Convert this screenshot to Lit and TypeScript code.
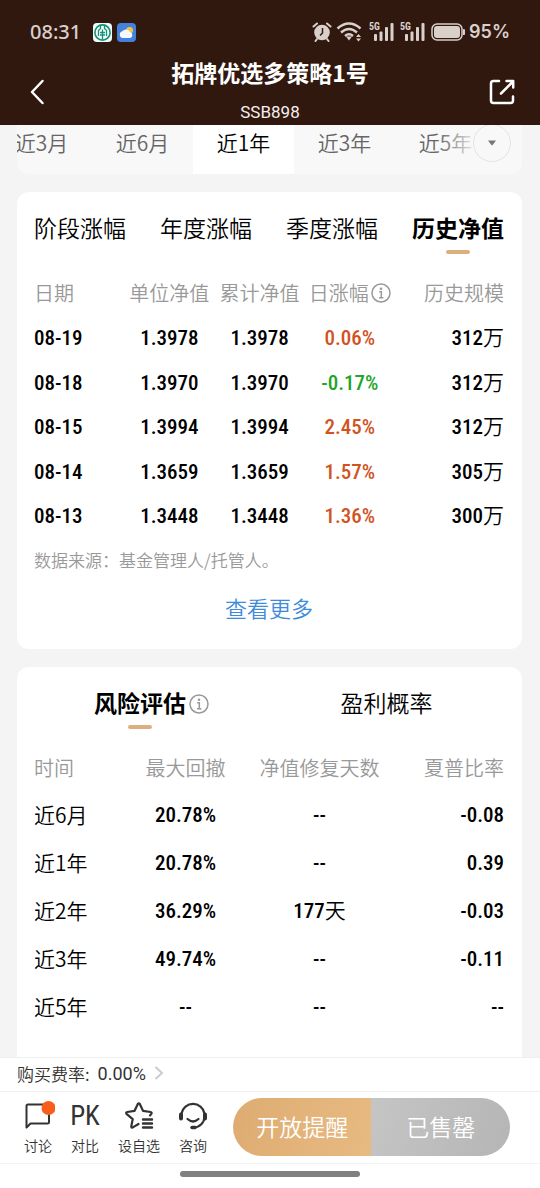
import { LitElement, html, css, svg } from "lit";
import { customElement, state } from "lit/decorators.js";
import { classMap } from "lit/directives/class-map.js";

const navRows = [
  { date: "08-19", unit: "1.3978", total: "1.3978", change: "0.06%", size: "312" },
  { date: "08-18", unit: "1.3970", total: "1.3970", change: "-0.17%", size: "312" },
  { date: "08-15", unit: "1.3994", total: "1.3994", change: "2.45%", size: "312" },
  { date: "08-14", unit: "1.3659", total: "1.3659", change: "1.57%", size: "305" },
  { date: "08-13", unit: "1.3448", total: "1.3448", change: "1.36%", size: "300" },
];

const riskRows = [
  { period: "近6月", drawdown: "20.78%", days: "--", sharpe: "-0.08" },
  { period: "近1年", drawdown: "20.78%", days: "--", sharpe: "0.39" },
  { period: "近2年", drawdown: "36.29%", days: "177", sharpe: "-0.03" },
  { period: "近3年", drawdown: "49.74%", days: "--", sharpe: "-0.11" },
  { period: "近5年", drawdown: "--", days: "--", sharpe: "--" },
];

const shared = css`
  * {
    box-sizing: border-box;
  }
  button {
    margin: 0;
    padding: 0;
    border: 0;
    background: none;
    color: inherit;
    font: inherit;
    white-space: nowrap;
    cursor: pointer;
  }
  svg {
    display: block;
    flex: none;
  }
`;

const infoIcon = html`<svg width="20" height="20" viewBox="0 0 20 20" fill="none" stroke="#999" stroke-width="1.5">
  <circle cx="10" cy="10" r="9" />
  <circle cx="10" cy="5.8" r="1.3" fill="#999" stroke="none" />
  <path d="M8.2 8.8H10.3V14.6M8 14.8H12.4" />
</svg>`;

@customElement("status-bar")
class StatusBar extends LitElement {
  static styles = [
    shared,
    css`
      :host {
        display: flex;
        align-items: center;
        height: 32px;
        padding: 0 30px;
        color: #d9d0cc;
        font: 500 20px/32px Inter, "Noto Sans", sans-serif;
      }
      .apps {
        display: flex;
        gap: 5px;
        margin-left: 12px;
      }
      .system {
        display: flex;
        align-items: center;
        gap: 4px;
        margin-left: auto;
      }
      .time {
        font-family: "Noto Sans", sans-serif;
      }
      .percent {
        font-size: 18px;
        font-weight: 600;
      }
    `,
  ];

  signal() {
    return html`<svg width="27" height="20" viewBox="0 0 27 20" fill="#d9d0cc">
      ${svg`<text x="0" y="8" font-size="10" font-weight="700" font-family="Roboto Condensed, Roboto, sans-serif">5G</text>`}
      <rect x="5" y="12" width="3" height="7" rx="1" />
      <rect x="10.500" y="9.500" width="3" height="9.500" rx="1" />
      <rect x="16" y="5" width="3" height="14" rx="1" />
      <rect x="21.500" y="1" width="3" height="18" rx="1" />
    </svg>`;
  }

  render() {
    return html`
      <span class="time">08:31</span>
      <span class="apps">
        <svg width="19" height="19" viewBox="0 0 19 19">
          <rect width="19" height="19" rx="4" fill="#f3fbf8" />
          <circle cx="9.500" cy="9.500" r="7.600" fill="none" stroke="#159079" stroke-width="1.600" />
          <path d="M7.500 1.800V5.500L5.500 7.500V13M11.500 1.800V5.500L13.500 7.500V13M9.500 6.500V16M7 9.500H12M7 12H12" fill="none" stroke="#159079" stroke-width="1.300" />
        </svg>
        <svg width="19" height="19" viewBox="0 0 19 19">
          <rect width="19" height="19" rx="4" fill="#4481de" />
          <circle cx="12.600" cy="7.300" r="3.400" fill="#f4c440" />
          <path d="M6 15a3.400 3.400 0 0 1-.6-6.700 4.300 4.300 0 0 1 7.400.8A3 3 0 0 1 13 15z" fill="#f7f9ff" />
        </svg>
      </span>
      <span class="system">
        <svg width="20" height="20" viewBox="0 0 20 20" fill="#d9d0cc">
          <circle cx="10" cy="10.500" r="7.800" />
          <path d="M1.500 4.500L5 1.500M18.500 4.500L15 1.500M5 17L3.500 19M15 17L16.500 19" stroke="#d9d0cc" stroke-width="2" stroke-linecap="round" />
          <path d="M10.500 6V11L8 13.500" fill="none" stroke="#31180f" stroke-width="1.500" />
        </svg>
        <svg width="29" height="20" viewBox="0 0 29 20" fill="none" stroke="#d9d0cc" stroke-width="2.400">
          <path d="M1.500 6.500Q13 -3.500 24.500 6.500M5 10.500Q13 3.500 21 10.500M9 14Q13 10.500 17 14" />
          <path d="M10 14.500H16L13 18.500z" fill="#d9d0cc" stroke="none" />
          <path d="M20 15L22.500 12L25 15zM20 16.500L22.500 19.500L25 16.500z" fill="#d9d0cc" stroke="none" />
        </svg>
        ${this.signal()} ${this.signal()}
        <svg width="34" height="18" viewBox="0 0 34 18">
          <rect x="1" y="1" width="30" height="16" rx="5" fill="none" stroke="#d9d0cc" stroke-width="1.500" />
          <rect x="3" y="3" width="26" height="12" rx="3" fill="#d9d0cc" />
          <path d="M32 6a3 3 0 0 1 0 6z" fill="#d9d0cc" />
        </svg>
        <span class="percent">95%</span>
      </span>
    `;
  }
}

@customElement("title-bar")
class TitleBar extends LitElement {
  static styles = [
    shared,
    css`
      :host {
        display: grid;
        grid-template-columns: 28px 1fr 28px;
        align-items: center;
        height: 77px;
        padding: 6px 24px 0;
        color: #fff;
        text-align: center;
      }
      button {
        padding-top: 5px;
      }
      h1 {
        margin: 0 0 10px;
        font-size: 23px;
        line-height: 34px;
        font-weight: 700;
      }
      p {
        margin: 0;
        font: 400 17px/26px Roboto, sans-serif;
        color: #f5efec;
      }
    `,
  ];

  render() {
    return html`
      <button aria-label="返回">
        <svg width="28" height="28" viewBox="0 0 28 28" fill="none" stroke="#fff" stroke-width="2.500" stroke-linecap="round" stroke-linejoin="round">
          <path d="M18.500 3L8 14L18.500 25" />
        </svg>
      </button>
      <div>
        <h1>拓牌优选多策略1号</h1>
        <p>SSB898</p>
      </div>
      <button aria-label="分享">
        <svg width="28" height="28" viewBox="0 0 28 28" fill="none" stroke="#fff" stroke-width="2.500" stroke-linecap="round" stroke-linejoin="round">
          <path d="M11 3H5.500Q3 3 3 5.500V22.500Q3 25 5.500 25H22.500Q25 25 25 22.500V18.500M13 15.500L25 3.500M18.500 3H25.200V9.500" />
        </svg>
      </button>
    `;
  }
}

@customElement("period-tabs")
class PeriodTabs extends LitElement {
  @state() active = "近1年";

  static styles = [
    shared,
    css`
      :host {
        display: block;
        position: relative;
        overflow: hidden;
        border-radius: 12px;
        background: #f8f8f8;
        color: #666;
        font-size: 21px;
      }
      .strip {
        display: flex;
        height: 62px;
        margin-left: -26px;
        margin-right: 26px;
      }
      .tab {
        flex: 0 0 20%;
        padding-bottom: 3px;
      }
      .active {
        background: #fff;
        color: #000;
      }
      .more {
        position: absolute;
        top: 0;
        right: 0;
        bottom: 0;
        display: flex;
        align-items: center;
        justify-content: flex-end;
        width: 84px;
        padding-right: 11px;
        background: linear-gradient(to right, #f8f8f800, #f8f8f8 50%);
      }
      .round {
        display: grid;
        place-items: center;
        width: 38px;
        height: 38px;
        border: 1px solid #e3e3e3;
        border-radius: 50%;
        background: #f8f8f8;
      }
    `,
  ];

  render() {
    return html`
      <div class="strip">
        ${["近3月", "近6月", "近1年", "近3年", "近5年"].map(
          (t) => html`<button class=${classMap({ tab: true, active: t === this.active })} @click=${() => (this.active = t)}>${t}</button>`
        )}
      </div>
      <div class="more">
        <button class="round" aria-label="更多区间">
          <svg width="10" height="6" viewBox="0 0 10 6"><path d="M1 0.500H9L5.600 5Q5 5.700 4.400 5z" fill="#777" /></svg>
        </button>
      </div>
    `;
  }
}

const cardStyles = css`
  :host {
    display: block;
    padding: 12px 18px 10px 17px;
    border-radius: 12px;
    background: #fff;
    color: #000;
  }
  .tabs {
    display: flex;
    justify-content: space-between;
    height: 50px;
    margin-bottom: 16px;
    font-size: 23px;
  }
  .tab {
    position: relative;
    padding-bottom: 4px;
  }
  .active {
    font-weight: 700;
  }
  .active::after {
    content: "";
    position: absolute;
    left: 50%;
    bottom: 0;
    width: 24px;
    height: 4px;
    margin-left: -12px;
    border-radius: 2px;
    background: #dcb07c;
  }
  table {
    width: 100%;
    table-layout: fixed;
    border-collapse: collapse;
    white-space: nowrap;
    font-size: 21px;
    line-height: 30px;
  }
  th,
  td {
    padding: 0;
    text-align: center;
  }
  th {
    height: 46px;
    color: #999;
    font-size: 20px;
    font-weight: inherit;
  }
  .mixed {
    padding-bottom: 2px;
  }
  th:first-child,
  td:first-child {
    text-align: left;
  }
  th:last-child,
  td:last-child {
    text-align: right;
  }
  .num {
    font-family: "Roboto Condensed", Roboto, sans-serif;
    font-size: 21px;
    font-weight: 500;
  }
`;

@customElement("nav-card")
class NavCard extends LitElement {
  @state() active = "历史净值";

  static styles = [
    shared,
    cardStyles,
    css`
      .col {
        width: 19.2%;
      }
      tbody tr:nth-child(odd) td {
        height: 44px;
      }
      tbody tr:nth-child(even) td {
        height: 45px;
      }
      .with-icon {
        display: flex;
        align-items: center;
        justify-content: center;
        gap: 2px;
      }
      .up {
        color: #d1531f;
      }
      .down {
        color: #1fa52a;
      }
      .source {
        margin: 0;
        padding-top: 2px;
        color: #999;
        font-size: 17px;
        line-height: 40px;
      }
      .all {
        display: block;
        width: 100%;
        height: 59px;
        padding-bottom: 5px;
        color: #3e8bdb;
        font-size: 22px;
      }
    `,
  ];

  render() {
    return html`
      <div class="tabs">
        ${["阶段涨幅", "年度涨幅", "季度涨幅", "历史净值"].map(
          (t) => html`<button class=${classMap({ tab: true, active: t === this.active })} @click=${() => (this.active = t)}>${t}</button>`
        )}
      </div>
      <table>
        <thead>
          <tr>
            <th class="col">日期</th>
            <th class="col">单位净值</th>
            <th class="col">累计净值</th>
            <th class="col"><span class="with-icon">日涨幅${infoIcon}</span></th>
            <th>历史规模</th>
          </tr>
        </thead>
        <tbody>
          ${navRows.map(
            (r) => html`<tr>
              <td class="num">${r.date}</td>
              <td class="num">${r.unit}</td>
              <td class="num">${r.total}</td>
              <td class="num ${r.change.startsWith("-") ? "down" : "up"}">${r.change}</td>
              <td class="mixed"><span class="num">${r.size}</span>万</td>
            </tr>`
          )}
        </tbody>
      </table>
      <p class="source">数据来源：基金管理人/托管人。</p>
      <button class="all">查看更多</button>
    `;
  }
}

@customElement("risk-card")
class RiskCard extends LitElement {
  static styles = [
    shared,
    cardStyles,
    css`
      :host {
        padding-bottom: 40px;
      }
      .half {
        display: flex;
        flex: 1;
        align-items: center;
        justify-content: center;
        gap: 3px;
      }
      .tab {
        height: 50px;
      }
      .period {
        width: 18%;
      }
      .mid {
        width: 28.5%;
      }
      td {
        height: 48px;
      }
    `,
  ];

  render() {
    return html`
      <div class="tabs">
        <div class="half"><button class="tab active">风险评估</button>${infoIcon}</div>
        <div class="half"><button class="tab">盈利概率</button></div>
      </div>
      <table>
        <thead>
          <tr>
            <th class="period">时间</th>
            <th class="mid">最大回撤</th>
            <th class="mid">净值修复天数</th>
            <th>夏普比率</th>
          </tr>
        </thead>
        <tbody>
          ${riskRows.map(
            (r) => html`<tr>
              <td class="mixed">${r.period}</td>
              <td class="num">${r.drawdown}</td>
              <td class="mixed"><span class="num">${r.days}</span>${r.days === "--" ? "" : "天"}</td>
              <td class="num">${r.sharpe}</td>
            </tr>`
          )}
        </tbody>
      </table>
    `;
  }
}

@customElement("action-bar")
class ActionBar extends LitElement {
  static styles = [
    shared,
    css`
      :host {
        display: block;
        background: #fff;
        color: #333;
      }
      .fee {
        display: flex;
        align-items: center;
        gap: 8px;
        height: 35px;
        padding: 0 17px 3px;
        border-top: 1px solid #eee;
        border-bottom: 1px solid #f0f0f0;
        color: #333;
        font-size: 17px;
        text-decoration: none;
      }
      .rate {
        font-family: Roboto, sans-serif;
        font-size: 18px;
        font-weight: 400;
      }
      .bar {
        display: flex;
        align-items: center;
        justify-content: space-between;
        height: 72px;
        padding: 0 30px 2px 24px;
        border-bottom: 1px solid #f3f3f3;
      }
      .items {
        display: flex;
        gap: 19px;
      }
      .item {
        display: flex;
        flex-direction: column;
        align-items: center;
        font-size: 14px;
        line-height: 20px;
      }
      .glyph {
        display: flex;
        align-items: center;
        justify-content: center;
        height: 34px;
        width: 28px;
        margin-bottom: 2px;
      }
      .pk {
        font: 400 27px/34px "Roboto Condensed", Roboto, sans-serif;
      }
      .buy {
        display: grid;
        grid-template-columns: 1fr 1fr;
        flex: 0 0 57%;
        height: 58px;
        overflow: hidden;
        border-radius: 29px;
        color: #fff;
        font-size: 23px;
      }
      .remind,
      .sold {
        padding-bottom: 2px;
      }
      .remind {
        background: linear-gradient(100deg, #deac72, #e7ba82);
      }
      .sold {
        background: linear-gradient(110deg, #c5c5c5, #b5b5b5);
      }
      .home {
        display: grid;
        place-items: start center;
        height: 24px;
        padding-top: 7px;
      }
      .handle {
        width: 180px;
        height: 6px;
        border-radius: 3px;
        background: #808080;
      }
    `,
  ];

  render() {
    return html`
      <a class="fee" href="#fee">
        <span>购买费率:</span>
        <span class="rate">0.00%</span>
        <svg width="10" height="14" viewBox="0 0 10 14" fill="none" stroke="#ccc" stroke-width="2"><path d="M1.500 1L8 7L1.500 13" /></svg>
      </a>
      <div class="bar">
        <div class="items">
          <button class="item">
            <span class="glyph">
              <svg width="34" height="34" viewBox="0 0 34 34" fill="none" stroke="#333" stroke-width="2" stroke-linejoin="round">
                <path d="M5.500 28.500V7Q5.500 5.500 7 5.500H26.500Q28 5.500 28 7V23Q28 24.500 26.500 24.500H9.500z" />
                <circle cx="27.500" cy="9" r="7" fill="#f95d1c" stroke="none" />
              </svg>
            </span>
            讨论
          </button>
          <button class="item"><span class="glyph pk">PK</span>对比</button>
          <button class="item">
            <span class="glyph">
              <svg width="32" height="32" viewBox="0 0 32 32" fill="none" stroke="#333" stroke-width="2.200" stroke-linejoin="round" stroke-linecap="round">
                <path d="M15.500 24L9.800 27.400Q8 28 8.300 26.200L9.700 19.200L3.500 13.800Q2.500 12.300 4.200 12L11.600 10.800L14.800 4Q15.800 2.700 16.800 4L20 10.800L27.600 12Q29.300 12.300 28.300 13.800L27 15.500" />
                <path d="M20 19.500H29M20 23.500H29M20 27.500H29" stroke-width="2.400" />
              </svg>
            </span>
            设自选
          </button>
          <button class="item">
            <span class="glyph">
              <svg width="32" height="32" viewBox="0 0 32 32" fill="none" stroke="#333" stroke-width="2.200" stroke-linecap="round">
                <path d="M4.500 13.500A11.700 11.700 0 0 1 27.500 13.500V17A11 11 0 0 1 17 27.500" />
                <path d="M4 14.500V18.500M28 14.500V18.500" stroke-width="4" />
                <path d="M15 27.500H18" stroke-width="3.500" />
                <path d="M10.500 19Q16 24 21.500 19" />
              </svg>
            </span>
            咨询
          </button>
        </div>
        <div class="buy">
          <button class="remind">开放提醒</button>
          <button class="sold">已售罄</button>
        </div>
      </div>
      <div class="home"><div class="handle"></div></div>
    `;
  }
}

@customElement("app-root")
class AppRoot extends LitElement {
  static styles = [
    shared,
    css`
      :host {
        display: flex;
        flex-direction: column;
        height: 100vh;
        overflow: hidden;
        background: #f4f4f4;
        font-family: "Noto Sans CJK SC", sans-serif;
        font-weight: 350;
      }
      header {
        flex: none;
        padding-top: 16px;
        background: #31180f;
      }
      main {
        flex: 1;
        min-height: 0;
        overflow: hidden;
        padding: 0 18px 0 17px;
      }
      .scroll {
        display: grid;
        gap: 18px;
        margin-top: -13px;
      }
    `,
  ];

  render() {
    return html`
      <header>
        <status-bar></status-bar>
        <title-bar></title-bar>
      </header>
      <main>
        <div class="scroll">
          <period-tabs></period-tabs>
          <nav-card></nav-card>
          <risk-card></risk-card>
        </div>
      </main>
      <action-bar></action-bar>
    `;
  }
}
